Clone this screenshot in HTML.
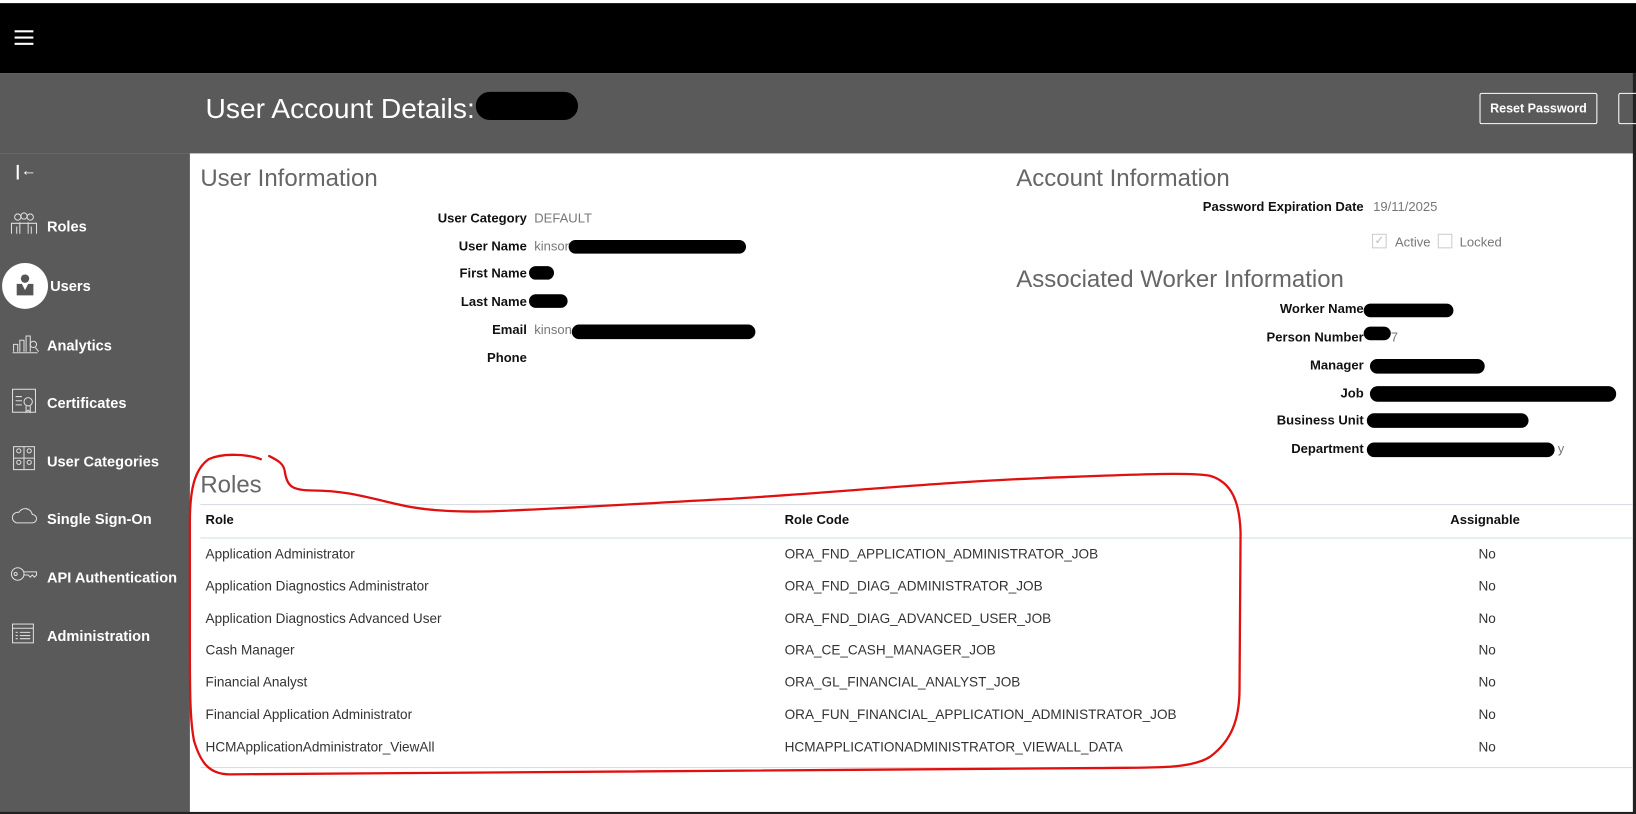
<!DOCTYPE html>
<html><head><meta charset="utf-8">
<style>
html,body{margin:0;padding:0;background:#fff;overflow:hidden;width:1636px;height:814px}
#w{position:absolute;left:0;top:0;width:1568px;height:780px;transform:scale(1.04337,1.04359);transform-origin:0 0;font-family:"Liberation Sans",sans-serif;background:#fff}
.a{position:absolute;white-space:nowrap}
.side{color:#fff;font-weight:bold;font-size:14px}
.lbl{font-weight:bold;font-size:12.5px;color:#111;text-align:right}
.val{font-size:12.5px;color:#777}
.h{font-size:23px;color:#666;font-weight:300}
.blk{position:absolute;background:#000;border-radius:10px}
.row{font-size:13px;color:#333}
.line{position:absolute;height:1px;background:#d6dde3}
</style></head><body><div id="w">
<div class="a" style="left:0;top:3px;width:1568px;height:67px;background:#000"></div>
<div class="a" style="left:14px;top:29px;width:18px;height:2px;background:#fff"></div>
<div class="a" style="left:14px;top:35px;width:18px;height:2px;background:#fff"></div>
<div class="a" style="left:14px;top:41px;width:18px;height:2px;background:#fff"></div>
<div class="a" style="left:0;top:70px;width:1568px;height:77px;background:#5a5a5a"></div>
<div class="a" style="left:0;top:147px;width:182px;height:633px;background:#5a5a5a"></div>
<div class="a" style="left:1565px;top:70px;width:3px;height:710px;background:#222"></div>
<div class="a" style="left:0;top:778px;width:1568px;height:2px;background:#222"></div>
<div class="a" style="left:197px;top:89px;font-size:27px;color:#fff;font-weight:300">User Account Details:</div>
<div class="blk" style="left:456px;top:88px;width:98px;height:27px;border-radius:14px"></div>
<div class="a" style="left:1418px;top:89px;width:111px;height:28px;border:1px solid #fff;border-radius:2px;color:#fff;font-size:12px;font-weight:bold;text-align:center;line-height:28px">Reset Password</div>
<div class="a" style="left:1551px;top:89px;width:20px;height:28px;border:1px solid #fff;border-radius:2px"></div>
<!-- sidebar -->
<div class="a" style="left:16px;top:158px;width:2px;height:14px;background:#fff"></div>
<div class="a side" style="left:20px;top:155px;font-size:15px">&#8592;</div>
<svg class="a" style="left:10px;top:203px" width="26" height="22" viewBox="0 0 26 22" fill="none" stroke="#ddd" stroke-width="1"><circle cx="7" cy="5" r="3"/><circle cx="13" cy="4" r="3"/><circle cx="19" cy="5" r="3"/><path d="M1 21V11h24v10M6 21v-7M20 21v-7M9 21V10M17 21V10"/></svg>
<div class="a side" style="left:45px;top:209px">Roles</div>
<div class="a" style="left:2px;top:252px;width:44px;height:44px;border-radius:50%;background:#fff"></div>
<svg class="a" style="left:15px;top:262px" width="18" height="22" viewBox="0 0 18 22"><circle cx="9" cy="5" r="4" fill="#555"/><path d="M1 10h5l3 6 3-6h5v11H1z" fill="#555"/></svg>
<div class="a side" style="left:48px;top:266px">Users</div>
<svg class="a" style="left:10px;top:318px" width="28" height="22" viewBox="0 0 28 22" fill="none" stroke="#ddd"><path d="M2 20h24M3 19v-7h4v7M9 19V8h4v11M15 19V4h4v15"/><circle cx="22" cy="12" r="3"/><path d="M24 15l3 4"/></svg>
<div class="a side" style="left:45px;top:323px">Analytics</div>
<svg class="a" style="left:11px;top:372px" width="24" height="26" viewBox="0 0 24 26" fill="none" stroke="#ddd"><rect x="1" y="1" width="22" height="22"/><path d="M4 8h6M4 12h6M4 16h6"/><circle cx="16" cy="13" r="4"/><path d="M14 17v6l2-2 2 2v-6"/></svg>
<div class="a side" style="left:45px;top:378px">Certificates</div>
<svg class="a" style="left:12px;top:427px" width="22" height="24" viewBox="0 0 22 24" fill="none" stroke="#ddd"><rect x="1" y="1" width="20" height="22"/><path d="M11 1v22M1 12h20"/><circle cx="6" cy="5" r="2"/><circle cx="16" cy="5" r="2"/><circle cx="6" cy="16" r="2"/><circle cx="16" cy="16" r="2"/></svg>
<div class="a side" style="left:45px;top:434px">User Categories</div>
<svg class="a" style="left:10px;top:484px" width="26" height="18" viewBox="0 0 26 18" fill="none" stroke="#ddd"><path d="M6 17h15a4 4 0 0 0 0-8 7 7 0 0 0-13-2 5 5 0 0 0-2 10z"/></svg>
<div class="a side" style="left:45px;top:489px">Single Sign-On</div>
<svg class="a" style="left:10px;top:542px" width="26" height="16" viewBox="0 0 26 16" fill="none" stroke="#ddd"><circle cx="7" cy="8" r="6"/><circle cx="5" cy="8" r="1.5"/><path d="M13 6h12v3l-2 2-2-2-2 2-2-2h-4"/></svg>
<div class="a side" style="left:45px;top:545px">API Authentication</div>
<svg class="a" style="left:11px;top:597px" width="22" height="20" viewBox="0 0 22 20" fill="none" stroke="#ddd"><rect x="1" y="1" width="20" height="18"/><path d="M1 5h20M4 9h2M4 12h2M4 15h2M8 9h10M8 12h10M8 15h10"/></svg>
<div class="a side" style="left:45px;top:601px">Administration</div>
<!-- user info -->
<div class="a h" style="left:192px;top:157px">User Information</div>
<div class="a lbl" style="right:1063px;top:202px">User Category</div><div class="a val" style="left:512px;top:202px">DEFAULT</div>
<div class="a lbl" style="right:1063px;top:229px">User Name</div><div class="a val" style="left:512px;top:229px">kinson</div>
<div class="blk" style="left:545px;top:230px;width:170px;height:13px"></div>
<div class="a lbl" style="right:1063px;top:255px">First Name</div><div class="blk" style="left:507px;top:255px;width:24px;height:13px"></div>
<div class="a lbl" style="right:1063px;top:282px">Last Name</div><div class="blk" style="left:507px;top:282px;width:37px;height:13px"></div>
<div class="a lbl" style="right:1063px;top:309px">Email</div><div class="a val" style="left:512px;top:309px">kinson</div><div class="blk" style="left:548px;top:311px;width:176px;height:14px"></div>
<div class="a lbl" style="right:1063px;top:336px">Phone</div>
<!-- account info -->
<div class="a h" style="left:974px;top:157px">Account Information</div>
<div class="a lbl" style="right:261px;top:191px">Password Expiration Date</div><div class="a val" style="left:1316px;top:191px">19/11/2025</div>
<div class="a" style="left:1315px;top:224px;width:12px;height:12px;border:1px solid #ccc;color:#bbb;font-size:11px;line-height:12px;text-align:center">&#10003;</div>
<div class="a val" style="left:1337px;top:225px">Active</div>
<div class="a" style="left:1378px;top:224px;width:12px;height:12px;border:1px solid #ccc"></div>
<div class="a val" style="left:1399px;top:225px">Locked</div>
<div class="a h" style="left:974px;top:254px">Associated Worker Information</div>
<div class="a lbl" style="right:261px;top:289px">Worker Name</div><div class="blk" style="left:1307px;top:291px;width:86px;height:13px"></div>
<div class="a lbl" style="right:261px;top:316px">Person Number</div><div class="a val" style="left:1333px;top:316px">7</div><div class="blk" style="left:1307px;top:313px;width:26px;height:13px"></div>
<div class="a lbl" style="right:261px;top:343px">Manager</div><div class="blk" style="left:1313px;top:344px;width:110px;height:14px"></div>
<div class="a lbl" style="right:261px;top:370px">Job</div><div class="blk" style="left:1313px;top:370px;width:236px;height:15px"></div>
<div class="a lbl" style="right:261px;top:396px">Business Unit</div><div class="blk" style="left:1310px;top:396px;width:155px;height:14px"></div>
<div class="a lbl" style="right:261px;top:423px">Department</div><div class="blk" style="left:1310px;top:424px;width:180px;height:14px"></div><div class="a val" style="left:1493px;top:423px">y</div>
<!-- roles -->
<div class="a h" style="left:192px;top:451px">Roles</div>
<div class="line" style="left:192px;top:483px;width:1373px"></div>
<div class="a lbl" style="left:197px;top:491px;text-align:left">Role</div>
<div class="a lbl" style="left:752px;top:491px;text-align:left">Role Code</div>
<div class="a lbl" style="left:1390px;top:491px;text-align:left">Assignable</div>
<div class="line" style="left:192px;top:515px;width:1373px"></div>
<div class="a row" style="left:197px;top:523px">Application Administrator</div><div class="a row" style="left:752px;top:523px">ORA_FND_APPLICATION_ADMINISTRATOR_JOB</div><div class="a row" style="left:1417px;top:523px">No</div>
<div class="a row" style="left:197px;top:554px">Application Diagnostics Administrator</div><div class="a row" style="left:752px;top:554px">ORA_FND_DIAG_ADMINISTRATOR_JOB</div><div class="a row" style="left:1417px;top:554px">No</div>
<div class="a row" style="left:197px;top:585px">Application Diagnostics Advanced User</div><div class="a row" style="left:752px;top:585px">ORA_FND_DIAG_ADVANCED_USER_JOB</div><div class="a row" style="left:1417px;top:585px">No</div>
<div class="a row" style="left:197px;top:615px">Cash Manager</div><div class="a row" style="left:752px;top:615px">ORA_CE_CASH_MANAGER_JOB</div><div class="a row" style="left:1417px;top:615px">No</div>
<div class="a row" style="left:197px;top:646px">Financial Analyst</div><div class="a row" style="left:752px;top:646px">ORA_GL_FINANCIAL_ANALYST_JOB</div><div class="a row" style="left:1417px;top:646px">No</div>
<div class="a row" style="left:197px;top:677px">Financial Application Administrator</div><div class="a row" style="left:752px;top:677px">ORA_FUN_FINANCIAL_APPLICATION_ADMINISTRATOR_JOB</div><div class="a row" style="left:1417px;top:677px">No</div>
<div class="a row" style="left:197px;top:708px">HCMApplicationAdministrator_ViewAll</div><div class="a row" style="left:752px;top:708px">HCMAPPLICATIONADMINISTRATOR_VIEWALL_DATA</div><div class="a row" style="left:1417px;top:708px">No</div>
<div class="line" style="left:192px;top:735px;width:1373px"></div>
<svg class="a" style="left:0;top:0" width="1568" height="780" viewBox="0 0 1568 780" fill="none" stroke="#e01010" stroke-width="2.2" stroke-linecap="round">
<path d="M258,437 C266,441 272,444 273,452 C275,466 280,470 300,470 C330,470 350,476 380,483 C400,488 430,491 470,490 C550,487 620,482 700,478 C800,472 900,462 1000,458 C1080,455 1140,452 1160,456 C1180,462 1188,480 1189,510 L1188,660 C1188,690 1180,710 1160,725 C1140,738 1100,735 1050,736 C900,738 700,739 500,740 C400,741 300,742 220,742 C200,742 192,730 186,710 C182,690 182,660 182,620 L182,500 C182,470 186,450 200,440 C215,433 240,436 250,440"/>
</svg>
</div></body></html>
